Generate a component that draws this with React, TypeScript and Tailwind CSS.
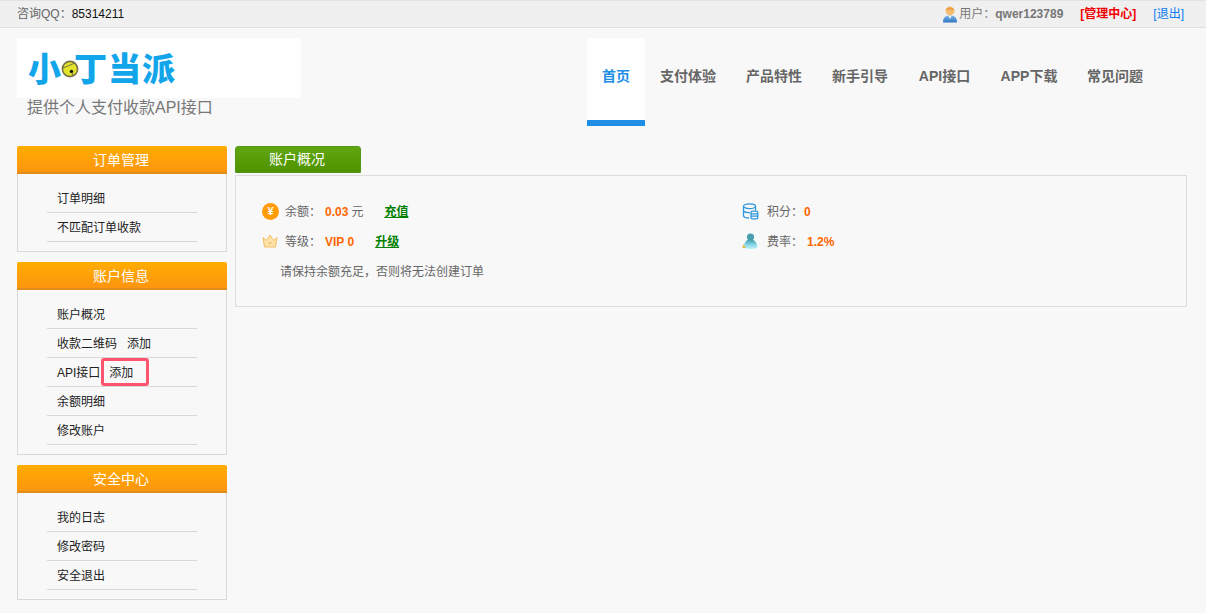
import React from "react";

const FONT = "font-['Liberation_Sans','Noto_Sans_CJK_SC',sans-serif]";

function Bell() {
  return (
    <svg width="18" height="18" viewBox="0 0 18 18" className="shrink-0">
      <circle cx="9" cy="9" r="7.6" fill="#e3e32a" stroke="#77724a" strokeWidth="1.6" />
      <path d="M2 8 C6 6 10 5 14 3" fill="none" stroke="#77724a" strokeWidth="1" />
      <circle cx="10.5" cy="11.5" r="1.7" fill="#111" />
      <path d="M11 12 L12 16" stroke="#77724a" strokeWidth="1" />
    </svg>
  );
}

function UserIcon() {
  return (
    <svg width="16" height="17" viewBox="0 0 16 17">
      <defs>
        <linearGradient id="ub" x1="0" y1="0" x2="0" y2="1">
          <stop offset="0" stopColor="#7fb4e6" />
          <stop offset="1" stopColor="#2f74c4" />
        </linearGradient>
      </defs>
      <path d="M1 16.5 C1 11 4 9.5 8 9.5 C12 9.5 15 11 15 16.5 Z" fill="url(#ub)" />
      <path d="M6 9.5 L8 13 L10 9.5 Z" fill="#e6f0fa" />
      <circle cx="8" cy="5" r="4.4" fill="#f6bb6c" />
      <path d="M3.6 4.6 C4 0.6 12 0.6 12.4 4.6 C10 3.2 6 3.2 3.6 4.6 Z" fill="#eb9a42" />
    </svg>
  );
}

function Yen() {
  return (
    <div className="flex h-[17px] w-[17px] items-center justify-center rounded-full bg-[#ff9c08] text-[11px] font-bold leading-none text-white">
      ¥
    </div>
  );
}

function Crown() {
  return (
    <svg width="16" height="14" viewBox="0 0 16 14">
      <path
        d="M1 3.5 L4.5 6.5 L8 1 L11.5 6.5 L15 3.5 L13.5 13 L2.5 13 Z"
        fill="#fde3a8"
        stroke="#f3bf62"
        strokeWidth="1"
        strokeLinejoin="round"
      />
      <path d="M6.5 8 L8 10 L9.5 8" fill="none" stroke="#e8a94a" strokeWidth="0.8" />
    </svg>
  );
}

function Db() {
  return (
    <svg width="17" height="17" viewBox="0 0 17 17" fill="none" stroke="#2f97dc" strokeWidth="1.3">
      <ellipse cx="7.5" cy="3.2" rx="6" ry="2.4" />
      <path d="M1.5 3.2 V12.5 C1.5 14 4 15 7 15" />
      <path d="M13.5 3.2 V7.5" />
      <path d="M1.5 8 C2.5 9.3 5 9.8 8 9.6" />
      <rect x="9" y="8.2" width="6.8" height="7.6" rx="1.4" />
      <path d="M9 10.8 H15.8 M9 13.2 H15.8" />
    </svg>
  );
}

function Person() {
  return (
    <svg width="17" height="18" viewBox="0 0 17 18">
      <defs>
        <linearGradient id="pg" x1="0" y1="0" x2="0" y2="1">
          <stop offset="0" stopColor="#3d9aa8" />
          <stop offset="0.6" stopColor="#8fdcec" />
          <stop offset="1" stopColor="#c4f0f6" />
        </linearGradient>
      </defs>
      <rect width="17" height="18" fill="#f6fafa" />
      <circle cx="8.5" cy="5" r="3.6" fill="#4a9fae" />
      <path d="M1.5 15.5 C2.5 9 5.5 7.5 8.5 7.5 C11.5 7.5 14.5 9 15.5 15.5 C11 17.5 6 17.5 1.5 15.5 Z" fill="url(#pg)" />
      <path d="M1 12 L0.5 16 L4 16 Z" fill="#e8b84a" />
    </svg>
  );
}

function Panel({ title, children }: { title: string; children: React.ReactNode }) {
  return (
    <section className="w-[210px]">
      <h3 className="h-[28px] rounded-t-[2px] border-b-2 border-[#e08d1a] bg-gradient-to-b from-[#ffad00] to-[#fd950f] pr-[2px] text-center text-[14px] font-normal leading-[28px] text-white">
        {title}
      </h3>
      <div className="border border-t-0 border-[#d9d9d9] pb-[9px] pl-[29px] pt-[10px]">{children}</div>
    </section>
  );
}

function Item({ children }: { children: React.ReactNode }) {
  return (
    <div className="flex h-[29px] w-[150px] items-center border-b border-[#d9d9d9] pl-[10px] pt-[2px] text-[12px] text-[#222]">
      {children}
    </div>
  );
}

const nav = [
  ["首页", "w-[58px]"],
  ["支付体验", "w-[86px]"],
  ["产品特性", "w-[86px]"],
  ["新手引导", "w-[86px]"],
  ["API接口", "w-[83px]"],
  ["APP下载", "w-[86px]"],
  ["常见问题", "w-[86px]"],
];

const ROW = "flex items-center [&>span]:pt-[2px] [&>b]:pt-[2px]";

export default function App() {
  return (
    <div className={`${FONT} min-h-[613px] bg-[#f8f8f8] text-[12px] text-[#666]`}>
      <header className="flex h-[28px] items-center justify-between border-y border-[#dfdfdf] border-t-[#e4e4e4] bg-[#f0f0f0] pl-[17px] pr-[22px]">
        <div>
          咨询QQ：<span className="text-[#111]">85314211</span>
        </div>
        <div className="flex items-center">
          <UserIcon />
          <span className="ml-[1px] text-[#777]">用户：</span>
          <b className="text-[#777]">qwer123789</b>
          <b className="ml-[15px] px-[2px] text-[#f00000]">[管理中心]</b>
          <span className="ml-[15px] text-[#0a7cf5]">[退出]</span>
        </div>
      </header>

      <div className="flex justify-between pl-[17px] pt-[10px]">
        <div>
          <div className="flex h-[60px] w-[284px] items-center bg-white pl-[11px] pt-[2px] text-[33px] font-black leading-none tracking-[1px] text-[#12a5ea]">
            <span>小</span>
            <span className="-ml-[1px]"><Bell /></span>
            <span className="-ml-[5px]">丁当派</span>
          </div>
          <p className="pl-[10px] text-[16px] leading-[20px] text-[#777]">提供个人支付收款API接口</p>
        </div>
        <nav className="mr-[48px] flex h-[88px]">
          {nav.map(([label, w], i) => (
            <a
              key={label}
              className={`${w} text-center text-[14px] font-bold leading-[76px] ${
                i === 0 ? "border-b-[6px] border-[#1e8ee6] bg-white text-[#1e8ee6]" : "text-[#666]"
              }`}
            >
              {label}
            </a>
          ))}
        </nav>
      </div>

      <div className="flex gap-[8px] pl-[17px] pt-[20px]">
        <aside className="flex flex-col gap-[10px]">
          <Panel title="订单管理">
            <Item>订单明细</Item>
            <Item>不匹配订单收款</Item>
          </Panel>
          <Panel title="账户信息">
            <Item>账户概况</Item>
            <Item>
              收款二维码<span className="ml-[10px]">添加</span>
            </Item>
            <div className="relative">
              <Item>
                API接口<span className="ml-[9px]">添加</span>
              </Item>
              <span className="absolute left-[54px] top-0 h-[28px] w-[48px] rounded-[3px] border-[3px] border-[#ff5470]" />
            </div>
            <Item>余额明细</Item>
            <Item>修改账户</Item>
          </Panel>
          <Panel title="安全中心">
            <Item>我的日志</Item>
            <Item>修改密码</Item>
            <Item>安全退出</Item>
          </Panel>
        </aside>

        <main className="w-[952px]">
          <div className="h-[27px] w-[126px] rounded-t-[3px] border border-[#55961a] bg-gradient-to-b from-[#5fa60f] to-[#4f9300] pr-[2px] text-center text-[14px] leading-[25px] text-white">
            账户概况
          </div>
          <div className="mt-[2px] h-[132px] border border-[#dcdcdc] pl-[26px] pt-[20px]">
            <div className="grid grid-cols-[480px_1fr] grid-rows-[30px_30px_30px]">
              <div className={ROW}>
                <Yen />
                <span className="ml-[6px]">余额：</span>
                <b className="ml-[4px] text-[#ff6600]">0.03</b>
                <span className="ml-[3px]">元</span>
                <b className="ml-[21px] text-[#008000] underline">充值</b>
              </div>
              <div className={ROW}>
                <Db />
                <span className="ml-[8px]">积分：</span>
                <b className="ml-[1px] text-[#ff6600]">0</b>
              </div>
              <div className={ROW}>
                <Crown />
                <span className="ml-[7px]">等级：</span>
                <b className="ml-[4px] text-[#ff6600]">VIP 0</b>
                <b className="ml-[21px] text-[#008000] underline">升级</b>
              </div>
              <div className={ROW}>
                <Person />
                <span className="ml-[8px]">费率：</span>
                <b className="ml-[4px] text-[#ff6600]">1.2%</b>
              </div>
              <div className="col-span-2 flex items-center pl-[18px] pt-[2px]">请保持余额充足，否则将无法创建订单</div>
            </div>
          </div>
        </main>
      </div>
    </div>
  );
}
